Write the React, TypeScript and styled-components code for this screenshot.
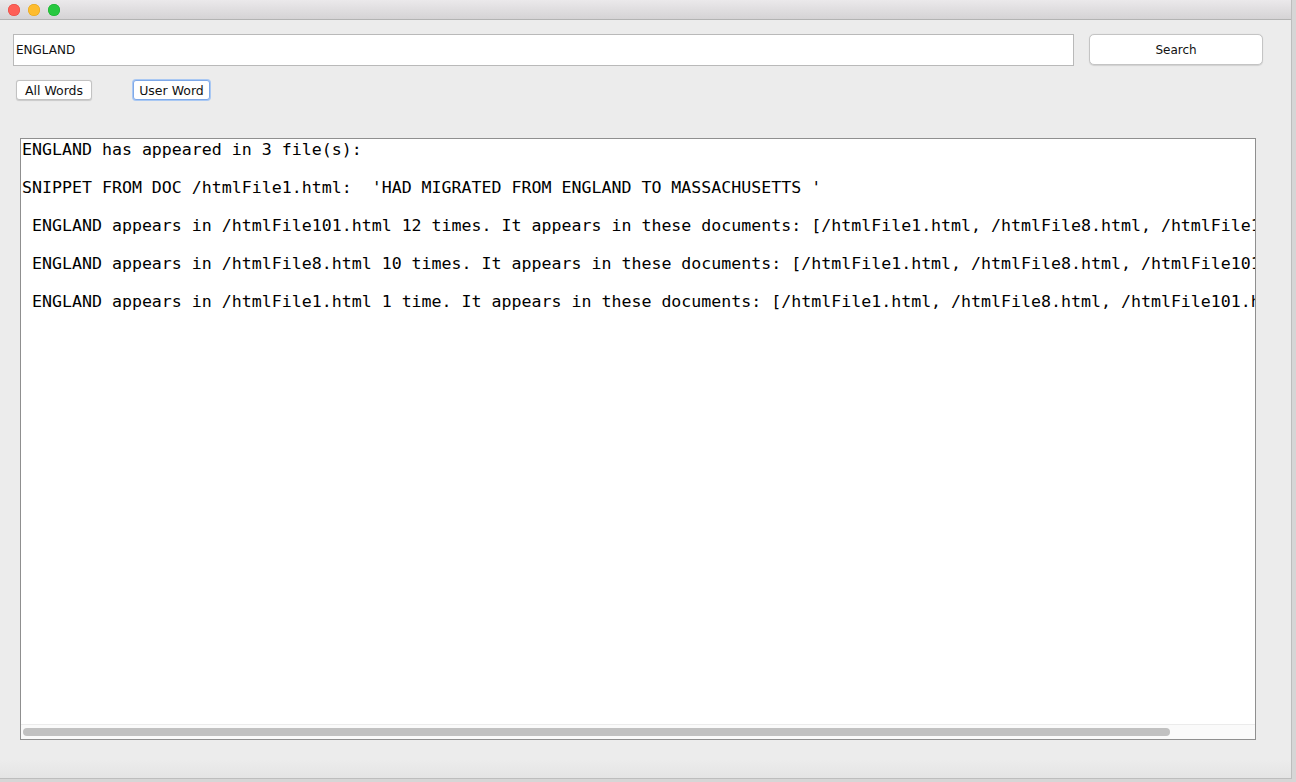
import React from "react";
import styled, { createGlobalStyle } from "styled-components";

const Global = createGlobalStyle`
  html, body { margin: 0; padding: 0; background: #d6d6d6; }
  body { width: 1296px; height: 782px; overflow: hidden; }
`;

const Window = styled.div`
  width: 1292px;
  height: 779px;
  background: #ececec;
  display: flex;
  flex-direction: column;
  border-right: 1px solid #bdbdbd;
  border-bottom: 1px solid #bdbdbd;
  box-sizing: border-box;
  font-family: "DejaVu Sans", "Liberation Sans", sans-serif;
`;

const TitleBar = styled.div`
  height: 20px;
  flex: none;
  box-sizing: border-box;
  background: linear-gradient(#ebe9eb, #d5d3d5);
  border-bottom: 1px solid #b3b3b3;
  display: flex;
  align-items: center;
  gap: 8px;
  padding-left: 8px;
`;

const Light = styled.span<{ $c: string; $b: string }>`
  width: 12px;
  height: 12px;
  border-radius: 50%;
  background: ${(p) => p.$c};
  box-shadow: inset 0 0 0 0.5px ${(p) => p.$b};
`;

const Body = styled.div`
  flex: 1;
  display: flex;
  flex-direction: column;
  padding: 14px 0 38px 0;
  background: linear-gradient(#ececec 0, #ececec 740px, #e4e4e4 100%);
`;

const TopRow = styled.div`
  display: flex;
  align-items: flex-start;
  gap: 15px;
  padding-left: 13px;
`;

const SearchField = styled.div`
  width: 1061px;
  height: 32px;
  box-sizing: border-box;
  background: #fff;
  border: 1px solid #b9b9b9;
  display: flex;
  align-items: center;
  padding: 0 0 0 2px;
  font-size: 12px;
  color: #111;
`;

const SearchButton = styled.div`
  width: 174px;
  height: 31px;
  box-sizing: border-box;
  background: #fff;
  border: 1px solid #c4c4c4;
  border-radius: 5px;
  box-shadow: 0 0.5px 1px rgba(0, 0, 0, 0.12);
  display: flex;
  align-items: center;
  justify-content: center;
  font-size: 12px;
  color: #111;
`;

const ButtonRow = styled.div`
  display: flex;
  gap: 41px;
  padding-left: 16px;
  margin-top: 14px;
`;

const SmallButton = styled.div<{ $focus?: boolean; $w: number }>`
  width: ${(p) => p.$w}px;
  height: 20px;
  box-sizing: border-box;
  background: #fff;
  border: 1px solid ${(p) => (p.$focus ? "#7fa9e8" : "#c2c2c2")};
  box-shadow: ${(p) =>
    p.$focus ? "0 0 0 1px #a9c8f3" : "0 0.5px 1px rgba(0,0,0,0.15)"};
  border-radius: 3px;
  display: flex;
  align-items: center;
  justify-content: center;
  font-size: 12.5px;
  color: #111;
`;

const TextArea = styled.div`
  margin: 38px 0 0 20px;
  width: 1236px;
  flex: 1;
  box-sizing: border-box;
  border: 1px solid #8f8f8f;
  background: #fff;
  display: flex;
  flex-direction: column;
  overflow: hidden;
`;

const Content = styled.div`
  flex: 1;
  overflow: hidden;
  white-space: pre;
  padding: 1px 0 0 1px;
  font-family: "DejaVu Sans Mono", "Liberation Mono", monospace;
  font-size: 16.6px;
  line-height: 19px;
  color: #000;
`;

const Track = styled.div`
  height: 15px;
  flex: none;
  box-sizing: border-box;
  border-top: 1px solid #ebebeb;
  background: #fafafa;
  padding: 3px 0 0 2px;
`;

const Thumb = styled.div`
  width: 1147px;
  height: 8px;
  border-radius: 4px;
  background: #c1c1c1;
`;

const text = [
  "ENGLAND has appeared in 3 file(s):",
  "",
  "SNIPPET FROM DOC /htmlFile1.html:  'HAD MIGRATED FROM ENGLAND TO MASSACHUSETTS '",
  "",
  " ENGLAND appears in /htmlFile101.html 12 times. It appears in these documents: [/htmlFile1.html, /htmlFile8.html, /htmlFile101.html]",
  "",
  " ENGLAND appears in /htmlFile8.html 10 times. It appears in these documents: [/htmlFile1.html, /htmlFile8.html, /htmlFile101.html]",
  "",
  " ENGLAND appears in /htmlFile1.html 1 time. It appears in these documents: [/htmlFile1.html, /htmlFile8.html, /htmlFile101.html]",
].join("\n");

export default function App() {
  return (
    <>
      <Global />
      <Window>
        <TitleBar>
          <Light $c="#fe5f57" $b="#e2463f" />
          <Light $c="#febc2e" $b="#e1a116" />
          <Light $c="#28c840" $b="#14ae2a" />
        </TitleBar>
        <Body>
          <TopRow>
            <SearchField>ENGLAND</SearchField>
            <SearchButton>Search</SearchButton>
          </TopRow>
          <ButtonRow>
            <SmallButton $w={76}>All Words</SmallButton>
            <SmallButton $w={77} $focus>
              User Word
            </SmallButton>
          </ButtonRow>
          <TextArea>
            <Content>{text}</Content>
            <Track>
              <Thumb />
            </Track>
          </TextArea>
        </Body>
      </Window>
    </>
  );
}
